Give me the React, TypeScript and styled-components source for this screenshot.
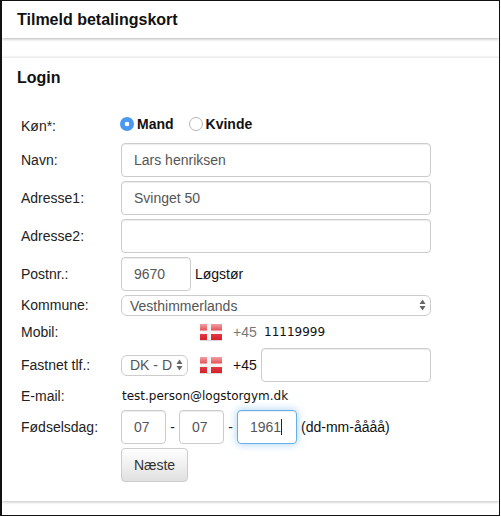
import React, { FC } from 'react'
import styled, { createGlobalStyle } from 'styled-components'

const GlobalStyle = createGlobalStyle`
	html, body {
		margin: 0;
		padding: 0;
		background: #fff;
	}
	body {
		font-family: 'Liberation Sans', Arial, sans-serif;
		font-size: 14px;
		color: #111;
	}
`

const Flag: FC = () => (
	<StyledFlag viewBox="0 0 22 16" width="22" height="16">
		<defs>
			<linearGradient id="flagShade" x1="0" y1="0" x2="0" y2="1">
				<stop offset="0" stopColor="#f0a0a4" />
				<stop offset="0.45" stopColor="#e4464e" />
				<stop offset="1" stopColor="#d81f2a" />
			</linearGradient>
		</defs>
		<rect width="22" height="16" fill="url(#flagShade)" />
		<rect x="7" width="4" height="16" fill="#f6f3f3" />
		<rect y="6.5" width="22" height="3.5" fill="#f6f3f3" />
	</StyledFlag>
)

const SelectArrows: FC = () => (
	<StyledArrows viewBox="0 0 7 12" width="7" height="12">
		<path d="M3.5 0.5 L6.5 5 H0.5 Z" fill="#666" />
		<path d="M3.5 11.5 L6.5 7 H0.5 Z" fill="#666" />
	</StyledArrows>
)

const App: FC = () => {
	return (
		<StyledFrame>
			<GlobalStyle />
			<StyledHeader>Tilmeld betalingskort</StyledHeader>
			<StyledPanel>
				<StyledTitle>Login</StyledTitle>
				<StyledForm>
					<StyledRow $height={25}>
						<StyledLabel $lift={2}>Køn*:</StyledLabel>
						<StyledRadioGroup>
							<StyledRadioLabel>
								<StyledRadio type="radio" name="gender" defaultChecked />
								Mand
							</StyledRadioLabel>
							<StyledRadioLabel>
								<StyledRadio type="radio" name="gender" />
								Kvinde
							</StyledRadioLabel>
						</StyledRadioGroup>
					</StyledRow>
					<StyledRow>
						<StyledLabel>Navn:</StyledLabel>
						<StyledInput $width={310} defaultValue="Lars henriksen" />
					</StyledRow>
					<StyledRow>
						<StyledLabel>Adresse1:</StyledLabel>
						<StyledInput $width={310} defaultValue="Svinget 50" />
					</StyledRow>
					<StyledRow>
						<StyledLabel>Adresse2:</StyledLabel>
						<StyledInput $width={310} />
					</StyledRow>
					<StyledRow>
						<StyledLabel>Postnr.:</StyledLabel>
						<StyledInput $width={70} defaultValue="9670" />
						<StyledCity>Løgstør</StyledCity>
					</StyledRow>
					<StyledRow $height={21}>
						<StyledLabel $lift={2}>Kommune:</StyledLabel>
						<StyledSelectWrap $width={310}>
							<StyledSelect defaultValue="v">
								<option value="v">Vesthimmerlands</option>
							</StyledSelect>
							<SelectArrows />
						</StyledSelectWrap>
					</StyledRow>
					<StyledRow $height={24}>
						<StyledLabel>Mobil:</StyledLabel>
						<StyledPhone $indent={79}>
							<Flag />
							<StyledPrefix $muted>+45</StyledPrefix>
							<StyledPlainValue $indent={3}>11119999</StyledPlainValue>
						</StyledPhone>
					</StyledRow>
					<StyledRow>
						<StyledLabel>Fastnet tlf.:</StyledLabel>
						<StyledSelectWrap $width={67}>
							<StyledSelect defaultValue="dk">
								<option value="dk">DK - D</option>
							</StyledSelect>
							<SelectArrows />
						</StyledSelectWrap>
						<StyledPhone $indent={12}>
							<Flag />
							<StyledPrefix>+45</StyledPrefix>
							<StyledInput $width={170} />
						</StyledPhone>
					</StyledRow>
					<StyledRow $height={20}>
						<StyledLabel>E-mail:</StyledLabel>
						<StyledPlainValue $indent={1}>test.person@logstorgym.dk</StyledPlainValue>
					</StyledRow>
					<StyledRow>
						<StyledLabel>Fødselsdag:</StyledLabel>
						<StyledInput $width={45} defaultValue="07" />
						<StyledDash>-</StyledDash>
						<StyledInput $width={45} defaultValue="07" />
						<StyledDash>-</StyledDash>
						<StyledFocusWrap>
							<StyledInput $width={60} $focused defaultValue="1961" />
							<StyledCaret />
						</StyledFocusWrap>
						<StyledHint>(dd-mm-åååå)</StyledHint>
					</StyledRow>
					<StyledRow>
						<StyledLabel />
						<StyledButton type="button">Næste</StyledButton>
					</StyledRow>
				</StyledForm>
			</StyledPanel>
		</StyledFrame>
	)
}

export default App

const StyledFrame = styled.div`
	box-sizing: border-box;
	width: 500px;
	height: 516px;
	border: 1px solid #111;
	border-left-width: 2px;
	overflow: hidden;
	background: #fff;
`

const StyledHeader = styled.div`
	box-sizing: border-box;
	height: 37px;
	padding: 0 15px;
	line-height: 37px;
	font-size: 16px;
	font-weight: bold;
	color: #111;
	background: #fff;
	box-shadow: 0 1px 3px rgba(0, 0, 0, 0.3);
`

const StyledPanel = styled.div`
	box-sizing: border-box;
	height: 444px;
	margin-top: 19px;
	padding: 0 15px;
	border-top: 1px solid #eee;
	box-shadow: 0 1px 3px rgba(0, 0, 0, 0.25);
`

const StyledTitle = styled.h2`
	margin: 0;
	padding-top: 11px;
	height: 46px;
	box-sizing: border-box;
	font-size: 16px;
	line-height: 18px;
	font-weight: bold;
	color: #111;
`

const StyledForm = styled.form`
	display: flex;
	flex-direction: column;
	gap: 4px;
	padding: 10px 0 0 4px;
`

const StyledRow = styled.div<{ $height?: number }>`
	display: flex;
	align-items: center;
	height: ${({ $height }) => $height ?? 34}px;
`

const StyledLabel = styled.label<{ $lift?: number }>`
	flex: 0 0 100px;
	margin-bottom: ${({ $lift }) => $lift ?? 0}px;
	font-size: 14px;
	color: #222;
`

const StyledRadioGroup = styled.div`
	display: flex;
	align-items: center;
	gap: 15px;
	margin-top: -5px;
	margin-left: -1px;
`

const StyledRadioLabel = styled.label`
	display: flex;
	align-items: center;
	gap: 3px;
	font-size: 14px;
	font-weight: bold;
	color: #111;
`

const StyledRadio = styled.input`
	appearance: none;
	box-sizing: border-box;
	width: 14px;
	height: 14px;
	margin: 0;
	border: 1px solid #b5b5b5;
	border-radius: 50%;
	background: #fff;
	&:checked {
		border: 0;
		background: radial-gradient(circle, #fff 0 2px, #4a98f0 2.6px);
	}
`

const StyledInput = styled.input<{ $width: number; $focused?: boolean }>`
	box-sizing: border-box;
	flex: none;
	width: ${({ $width }) => $width}px;
	height: 34px;
	padding: 6px 12px;
	border: 1px solid ${({ $focused }) => ($focused ? '#66afe9' : '#ccc')};
	border-radius: 4px;
	font-family: inherit;
	font-size: 14px;
	color: #555;
	background: #fff;
	outline: none;
	box-shadow: ${({ $focused }) =>
		$focused
			? 'inset 0 1px 1px rgba(0, 0, 0, 0.075), 0 0 8px rgba(102, 175, 233, 0.6)'
			: 'inset 0 1px 1px rgba(0, 0, 0, 0.075)'};
`

const StyledCity = styled.span`
	margin-left: 4px;
	color: #111;
`

const StyledSelectWrap = styled.div<{ $width: number }>`
	position: relative;
	flex: none;
	width: ${({ $width }) => $width}px;
	height: 21px;
`

const StyledSelect = styled.select`
	appearance: none;
	box-sizing: border-box;
	display: block;
	width: 100%;
	height: 100%;
	padding: 0 0 0 8px;
	border: 1px solid #ccc;
	border-radius: 6px;
	font-family: inherit;
	font-size: 14px;
	color: #555;
	background: #fff;
	outline: none;
`

const StyledArrows = styled.svg`
	position: absolute;
	top: 4px;
	right: 5px;
	pointer-events: none;
`

const StyledPhone = styled.div<{ $indent: number }>`
	display: flex;
	align-items: center;
	margin-left: ${({ $indent }) => $indent}px;
`

const StyledFlag = styled.svg`
	flex: none;
	display: block;
	filter: drop-shadow(0 1px 0 rgba(0, 0, 0, 0.15));
`

const StyledPrefix = styled.span<{ $muted?: boolean }>`
	flex: none;
	width: 28px;
	margin-left: 11px;
	color: ${({ $muted }) => ($muted ? '#777' : '#111')};
`

const StyledPlainValue = styled.span<{ $indent: number }>`
	margin-left: ${({ $indent }) => $indent}px;
	font-family: 'DejaVu Sans', sans-serif;
	font-size: 12px;
	color: #111;
`

const StyledDash = styled.span`
	flex: none;
	width: 13px;
	text-align: center;
	color: #222;
`

const StyledFocusWrap = styled.div`
	position: relative;
	flex: none;
`

const StyledCaret = styled.span`
	position: absolute;
	top: 9px;
	left: 44px;
	width: 1px;
	height: 16px;
	background: #222;
`

const StyledHint = styled.span`
	margin-left: 4px;
	color: #111;
`

const StyledButton = styled.button`
	box-sizing: border-box;
	width: 67px;
	height: 34px;
	padding: 0;
	border: 1px solid #ccc;
	border-radius: 4px;
	font-family: inherit;
	font-size: 14px;
	color: #333;
	background: linear-gradient(to bottom, #fff, #e0e0e0);
`
